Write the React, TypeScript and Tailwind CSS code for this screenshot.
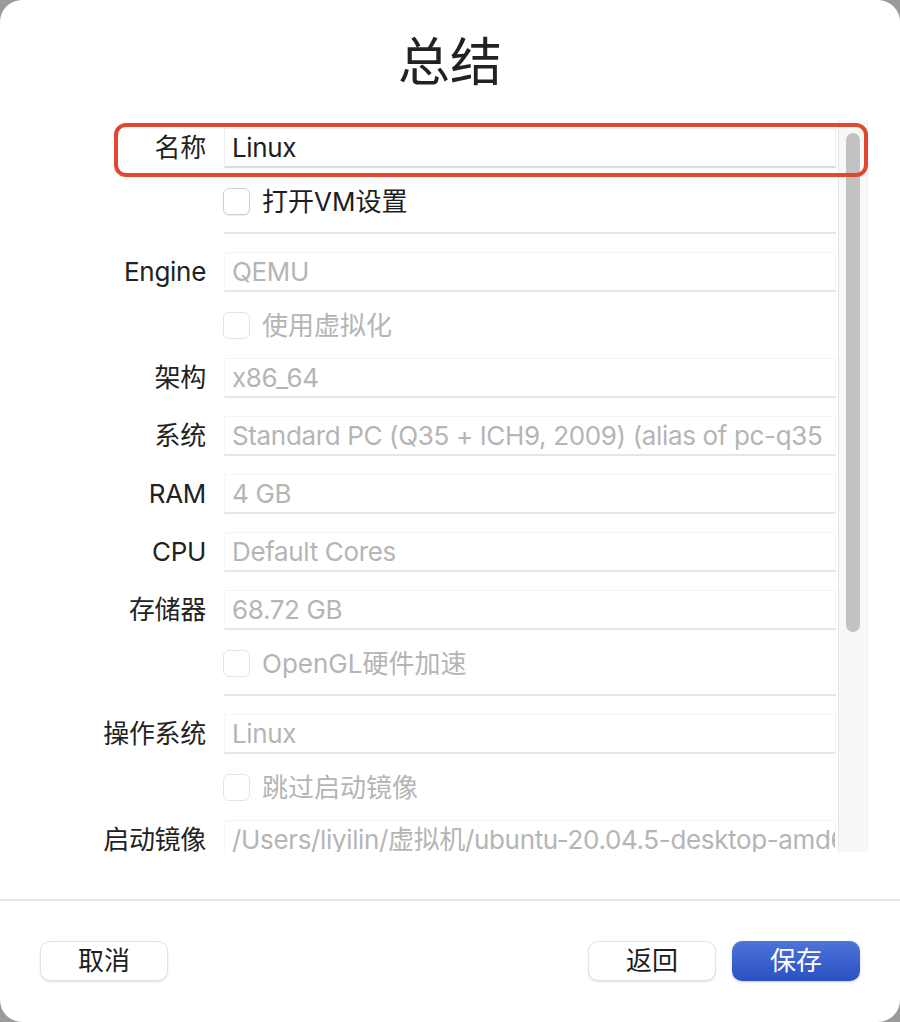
import React from "react";

const FONT = { fontFamily: '"Inter", "Noto Sans CJK SC", sans-serif' };

type Row =
  | { kind: "field"; label: string; value: string; active?: boolean; gap?: boolean }
  | { kind: "check"; label: string; disabled?: boolean; divider?: boolean };

const rows: Row[] = [
  { kind: "field", label: "名称", value: "Linux", active: true },
  { kind: "check", label: "打开VM设置", divider: true },
  { kind: "field", label: "Engine", value: "QEMU", gap: true },
  { kind: "check", label: "使用虚拟化", disabled: true },
  { kind: "field", label: "架构", value: "x86_64" },
  { kind: "field", label: "系统", value: "Standard PC (Q35 + ICH9, 2009) (alias of pc-q35", gap: true },
  { kind: "field", label: "RAM", value: "4 GB", gap: true },
  { kind: "field", label: "CPU", value: "Default Cores", gap: true },
  { kind: "field", label: "存储器", value: "68.72 GB", gap: true },
  { kind: "check", label: "OpenGL硬件加速", disabled: true, divider: true },
  { kind: "field", label: "操作系统", value: "Linux", gap: true },
  { kind: "check", label: "跳过启动镜像", disabled: true },
  { kind: "field", label: "启动镜像", value: "/Users/liyilin/虚拟机/ubuntu-20.04.5-desktop-amd64.iso" },
];

const Checkbox: React.FC<{ disabled?: boolean }> = ({ disabled }) => (
  <span
    className={`inline-block w-[27px] h-[27px] rounded-[6px] bg-white border ${
      disabled ? "border-[#e4e4e4]" : "border-[#cfcfcf] shadow-[0_1px_1px_rgba(0,0,0,0.08)]"
    }`}
  />
);

const FieldRow: React.FC<{ row: Extract<Row, { kind: "field" }> }> = ({ row }) => (
  <div className={`grid grid-cols-[206px_1fr] gap-x-[18px] items-center h-[40px] ${row.gap ? "mt-[18px]" : ""}`}>
    <div className="text-right text-[26px] text-[#222] leading-none tracking-[-0.3px]">{row.label}</div>
    <div
      className={`h-[40px] flex items-center pl-[7px] overflow-hidden whitespace-nowrap border-t border-x border-b-2 ${
        row.active
          ? "bg-white border-t-[#f0f0f0] border-x-[#ececec] border-b-[#dcdcdc]"
          : "border-t-[#f5f5f5] border-x-[#f6f6f6] border-b-[#e6e6e6]"
      }`}
    >
      <span
        className={`text-[26px] leading-none tracking-[-0.35px] ${row.active ? "text-[#1d1d1d]" : "text-[#b5b5b5]"}`}
      >
        {row.value}
      </span>
    </div>
  </div>
);

const CheckRow: React.FC<{ row: Extract<Row, { kind: "check" }> }> = ({ row }) => (
  <div className="grid grid-cols-[206px_1fr] gap-x-[18px]">
    <div />
    <div className="h-[66px] flex flex-col">
      <div className="flex-1 flex items-center gap-[12px] -ml-[1px] pt-[3px]">
        <Checkbox disabled={row.disabled} />
        <span className={`text-[26px] leading-none ${row.disabled ? "text-[#b5b5b5]" : "text-[#1d1d1d]"}`}>
          {row.label}
        </span>
      </div>
      <div className={`h-[2px] ${row.divider ? "bg-[#e6e6e6]" : ""}`} />
    </div>
  </div>
);

const Button: React.FC<{ children: React.ReactNode; primary?: boolean }> = ({ children, primary }) => (
  <button
    className={`w-[128px] h-[40px] rounded-[10px] text-[26px] leading-none flex items-center justify-center ${
      primary
        ? "bg-gradient-to-b from-[#4d74d8] to-[#2a4fc3] text-white shadow-[0_1px_2px_rgba(40,70,180,0.3)]"
        : "bg-white text-[#1d1d1d] border border-[#e2e2e2] shadow-[0_1px_2px_rgba(0,0,0,0.12)]"
    }`}
  >
    {children}
  </button>
);

export default function App() {
  return (
    <div className="w-[900px] h-[1022px] bg-[#9a9a9a]" style={FONT}>
      <div className="relative w-full h-full bg-white rounded-[22px] flex flex-col overflow-hidden">
        {/* Title */}
        <div className="h-[120px] pt-[6px] flex items-center justify-center">
          <h1 className="text-[52px] leading-none text-[#222]">总结</h1>
        </div>

        {/* Scrollable form */}
        <div className="h-[732px] flex">
          <div className="flex-1 overflow-hidden pt-[8px] pr-[2px]">
            {rows.map((row, i) =>
              row.kind === "field" ? <FieldRow key={i} row={row} /> : <CheckRow key={i} row={row} />
            )}
          </div>
          <div className="w-[30px] bg-[#f8f8f8] border-l border-[#e6e6e6] border-r border-r-[#f0f0f0] pt-[13px] px-[7px]">
            <div className="h-[499px] rounded-full bg-[#c2c2c2]" />
          </div>
          <div className="w-[32px]" />
        </div>

        {/* Footer */}
        <div className="mt-[47px] border-t-2 border-[#e6e6e6] flex justify-between px-[40px] pt-[40px]">
          <Button>取消</Button>
          <div className="flex gap-[16px]">
            <Button>返回</Button>
            <Button primary>保存</Button>
          </div>
        </div>

        {/* Highlight annotation */}
        <div className="absolute left-[114px] top-[123px] w-[754px] h-[54px] border-4 border-[#e2462f] rounded-[12px] pointer-events-none" />
      </div>
    </div>
  );
}
